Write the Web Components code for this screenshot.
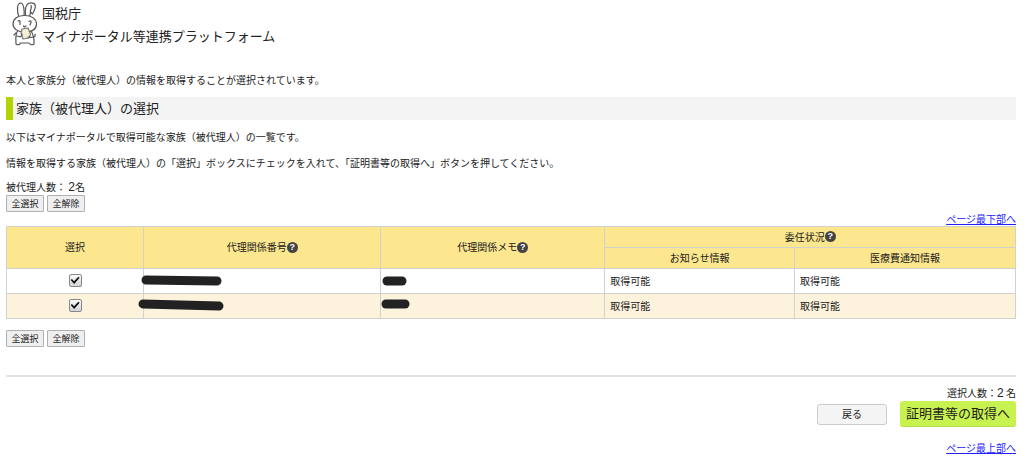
<!DOCTYPE html>
<html lang="ja">
<head>
<meta charset="utf-8">
<meta name="viewport" content="width=device-width, initial-scale=1">
<title>マイナポータル等連携プラットフォーム</title>
<style>
  body {
    margin: 0 8px 0 6px;
    background: #fff;
    color: #222;
    font-family: "Noto Sans CJK JP", sans-serif;
    font-size: 10px;
    line-height: 16px;
  }
  p { margin: 10px 0 0; }
  .lead { margin-top: 25px; }
  .intro { margin-top: 9px; }
  .count { margin-top: 8px; }
  .num { font-family: "Liberation Sans", "Noto Sans CJK JP", sans-serif; font-size: 12px; line-height: 1; }
  .bottom { margin-top: 11px; }
</style>
</head>
<body>
<site-header id="top">
  <span slot="agency">国税庁</span>
  <span slot="title">マイナポータル等連携プラットフォーム</span>
</site-header>

<main>
  <p class="lead">本人と家族分（被代理人）の情報を取得することが選択されています。</p>
  <section-heading>家族（被代理人）の選択</section-heading>
  <p class="intro">以下はマイナポータルで取得可能な家族（被代理人）の一覧です。</p>
  <p>情報を取得する家族（被代理人）の「選択」ボックスにチェックを入れて、「証明書等の取得へ」ボタンを押してください。</p>
  <p class="count">被代理人数： <span class="num">2</span>名</p>
  <select-buttons></select-buttons>
  <page-link href="#bottom">ページ最下部へ</page-link>
  <delegate-table></delegate-table>
  <select-buttons class="bottom"></select-buttons>
</main>

<action-footer id="bottom">
  <span slot="count">選択人数：<span class="num">2</span> 名</span>
  <page-link href="#top">ページ最上部へ</page-link>
</action-footer>

<script>
/**
 * Attach an open shadow root and fill it from a template
 */
function render (host, html) {
  const template = document.createElement('template')
  template.innerHTML = html
  host.attachShadow({ mode: 'open' }).appendChild(template.content.cloneNode(true))
}

/**
 * Logo and the two lines of the site name
 */
class SiteHeader extends HTMLElement {
  constructor () {
    super()
    render(this, `
      <style>
        :host { display: flex; gap: 4px; padding: 1px 0 0 6px; font-size: 13px; line-height: 23px; }
        svg { width: 26px; height: 46px; flex: none; }
        .name { display: flex; flex-direction: column; }
      </style>
      <svg viewBox="0 0 26 46" fill="#fff" stroke="#555" stroke-width="1.2" stroke-linecap="round" stroke-linejoin="round" aria-hidden="true">
        <path d="M7 16C5 11 4.500 2.500 8.500 2C12 2 12.500 10 12 15"/>
        <path d="M13.500 15C13 9 13 2.500 18 2C24 1.500 25 5 20.500 13L18.500 11L17.500 16"/>
        <path d="M18.500 11C18 8 20.500 7 19 4.500" fill="none"/>
        <path d="M6 29C4 32 3.500 37 4 43C6 44.500 8 43.500 8.500 42H17C18 43.500 20 44.500 22 43C22.500 38 21 33 18.500 29Z"/>
        <path d="M12.500 14.500C5 14.500 1 18.500 1 23C1 28 6 31 12.500 31C20 31 24.500 28 24.500 23C24.500 18 20 14.500 12.500 14.500Z"/>
        <path d="M6 20Q8 19 8 20.500V23.500M17 20.500Q19.500 19 19 21.500L18 24M11.500 25L12.500 26L14 25" fill="none"/>
        <path d="M10 28L16 27L18.500 33L17 37L11 38L9 32Z" fill="#f3edd4" stroke="#777"/>
        <path d="M4 32L2 34M5 35Q10 37 10 33M16 36Q19 37 23 35.500V33" fill="none"/>
      </svg>
      <div class="name"><slot name="agency"></slot><slot name="title"></slot></div>
    `)
  }
}

class SectionHeading extends HTMLElement {
  constructor () {
    super()
    render(this, `
      <style>
        :host { display: block; margin-top: 9px; }
        h1 {
          margin: 0;
          padding: 0 0 2px 3px;
          border-left: 7px solid #b5d300;
          background: #f4f4f4;
          font-size: 13px;
          font-weight: 400;
          line-height: 21px;
        }
      </style>
      <h1><slot></slot></h1>
    `)
  }
}

/**
 * Select all / clear all
 */
class SelectButtons extends HTMLElement {
  constructor () {
    super()
    render(this, `
      <style>
        :host { display: flex; gap: 3px; }
        button {
          box-sizing: border-box;
          min-width: 38px;
          height: 17px;
          padding: 0 4px;
          border: 1px solid #b0b0b0;
          border-radius: 1px;
          background: #efefef;
          color: inherit;
          font: inherit;
          font-size: 9px;
          line-height: 15px;
        }
      </style>
      <button type="button">全選択</button>
      <button type="button">全解除</button>
    `)
  }
}

class PageLink extends HTMLElement {
  constructor () {
    super()
    render(this, `
      <style>
        :host { display: block; line-height: 14px; text-align: right; }
        a { color: #22f; }
      </style>
      <a><slot></slot></a>
    `)
  }

  connectedCallback () {
    this.shadowRoot.querySelector('a').setAttribute('href', this.getAttribute('href'))
  }
}

class HelpIcon extends HTMLElement {
  constructor () {
    super()
    render(this, `
      <style>
        :host {
          display: inline-block;
          width: 11px;
          height: 11px;
          border-radius: 50%;
          background: #444;
          color: #fff;
          font: bold 9px/11px "Liberation Sans", sans-serif;
          text-align: center;
        }
      </style>?
    `)
  }
}

/**
 * Thick pen stroke over a private value, starts at the left edge of the cell
 */
class PenMask extends HTMLElement {
  constructor () {
    super()
    render(this, `
      <style>
        :host { position: absolute; left: 0; top: 0; }
        svg { display: block; overflow: visible; }
      </style>
      <svg width="1" height="24" fill="none" stroke="#222" stroke-linecap="round" aria-hidden="true"><path/></svg>
    `)
  }

  connectedCallback () {
    const path = this.shadowRoot.querySelector('path')
    path.setAttribute('d', this.getAttribute('d'))
    path.setAttribute('stroke-width', this.getAttribute('size'))
  }
}

class DelegateTable extends HTMLElement {
  constructor () {
    super()
    render(this, `
      <style>
        :host { display: block; }
        table { width: 100%; border-collapse: collapse; table-layout: fixed; }
        th, td { box-sizing: border-box; border: 1px solid #d2d2cc; padding: 0 5px 1px; }
        th { height: 21px; background: #fce68e; font-weight: 400; }
        td { position: relative; height: 25px; }
        tbody tr:nth-child(even) { background: #fdf2db; }
        .check { text-align: center; }
        help-icon { vertical-align: middle; margin-top: -2px; }
        input {
          appearance: none;
          display: block;
          box-sizing: border-box;
          width: 13px;
          height: 13px;
          margin: 0 auto;
          border: 1px solid #888;
          border-radius: 2px;
          background: linear-gradient(#fafafa, #d4d4d4);
        }
        input:checked::after {
          content: "";
          display: block;
          width: 9px;
          height: 9px;
          margin: 1px;
          background: #111;
          clip-path: polygon(0 45%, 15% 32%, 38% 58%, 86% 8%, 100% 20%, 40% 88%);
        }
      </style>
      <table>
        <colgroup>
          <col style="width: 13.6%"><col style="width: 23.5%"><col style="width: 22.2%"><col style="width: 18.8%"><col>
        </colgroup>
        <thead>
          <tr>
            <th rowspan="2" scope="col">選択</th>
            <th rowspan="2" scope="col">代理関係番号<help-icon></help-icon></th>
            <th rowspan="2" scope="col">代理関係メモ<help-icon></help-icon></th>
            <th colspan="2" scope="colgroup">委任状況<help-icon></help-icon></th>
          </tr>
          <tr>
            <th scope="col">お知らせ情報</th>
            <th scope="col">医療費通知情報</th>
          </tr>
        </thead>
        <tbody>
          <tr>
            <td class="check"><input type="checkbox" aria-label="選択 1" checked></td>
            <td><pen-mask d="M2 11L73 12" size="9"></pen-mask></td>
            <td><pen-mask d="M6 12H21" size="9"></pen-mask></td>
            <td>取得可能</td>
            <td>取得可能</td>
          </tr>
          <tr>
            <td class="check"><input type="checkbox" aria-label="選択 2" checked></td>
            <td><pen-mask d="M-1 10L75 12" size="9"></pen-mask></td>
            <td><pen-mask d="M5 10H24" size="9"></pen-mask></td>
            <td>取得可能</td>
            <td>取得可能</td>
          </tr>
        </tbody>
      </table>
    `)
  }
}

class ActionFooter extends HTMLElement {
  constructor () {
    super()
    render(this, `
      <style>
        :host { display: block; margin-top: 28px; padding-top: 8px; border-top: 2px solid #e2e2e2; text-align: right; }
        .buttons { display: flex; justify-content: flex-end; align-items: center; gap: 13px; margin-bottom: 14px; }
        button { box-sizing: border-box; color: inherit; font: inherit; padding: 0; }
        .back { width: 70px; height: 21px; border: 1px solid #ccc; border-radius: 3px; background: #f4f4f4; }
        .next {
          height: 26px;
          padding: 0 6px 2px;
          border: 0;
          border-bottom: 1px solid #b8df48;
          border-radius: 3px;
          background: #c8f250;
          font-size: 13px;
        }
      </style>
      <slot name="count"></slot>
      <div class="buttons">
        <button class="back" type="button">戻る</button>
        <button class="next" type="submit">証明書等の取得へ</button>
      </div>
      <slot></slot>
    `)
  }
}

window.customElements.define('site-header', SiteHeader)
window.customElements.define('section-heading', SectionHeading)
window.customElements.define('select-buttons', SelectButtons)
window.customElements.define('page-link', PageLink)
window.customElements.define('help-icon', HelpIcon)
window.customElements.define('pen-mask', PenMask)
window.customElements.define('delegate-table', DelegateTable)
window.customElements.define('action-footer', ActionFooter)
</script>
</body>
</html>
